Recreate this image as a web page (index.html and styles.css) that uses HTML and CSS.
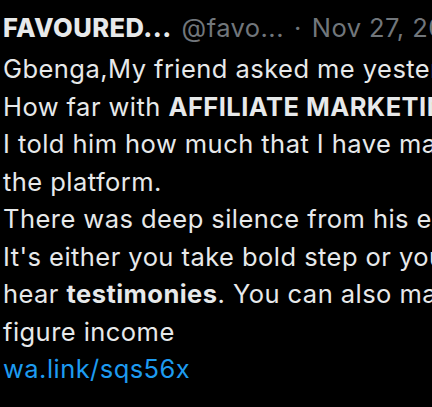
FILE: index.html
```html
<!DOCTYPE html>
<html>
<head>
<meta charset="utf-8">
<link rel="stylesheet" href="styles.css">
</head>
<body>
<div class="tweet">
  <div class="head">
    <span class="name">FAVOURED...</span>
    <span class="handle">@favo...</span>
    <span class="dot">·</span>
    <span class="date">Nov 27, 2022</span>
  </div>
  <div class="body">
    <div class="line">Gbenga,My friend asked me yesterday</div>
    <div class="line">How far with <b>AFFILIATE MARKETING</b>?</div>
    <div class="line">I told him how much that I have made on</div>
    <div class="line">the platform.</div>
    <div class="line">There was deep silence from his end.</div>
    <div class="line">It's either you take bold step or you keep</div>
    <div class="line">hear <b>testimonies</b>. You can also make 6</div>
    <div class="line">figure income</div>
    <div class="line"><a class="link" href="#">wa.link/sqs56x</a></div>
  </div>
</div>
</body>
</html>
```
FILE: styles.css
```css
html, body {
  margin: 0;
  padding: 0;
  background: #000;
  overflow: hidden;
  width: 432px;
  height: 407px;
}
.tweet {
  font-family: Inter, "Noto Sans", sans-serif;
  font-size: 25.5px;
  letter-spacing: 0.45px;
  color: #e7e9ea;
  padding: 8px 0 0 3px;
  white-space: nowrap;
}
.head {
  display: flex;
  gap: 10px;
  line-height: 40px;
  height: 40px;
}
.name {
  font-weight: 800;
  color: #e7e9ea;
}
.handle, .dot, .date {
  color: #71767b;
}
.body {
  margin-top: 2px;
  line-height: 37.5px;
}
.line b {
  font-weight: 700;
}
.link {
  color: #1d9bf0;
  text-decoration: none;
}
```
